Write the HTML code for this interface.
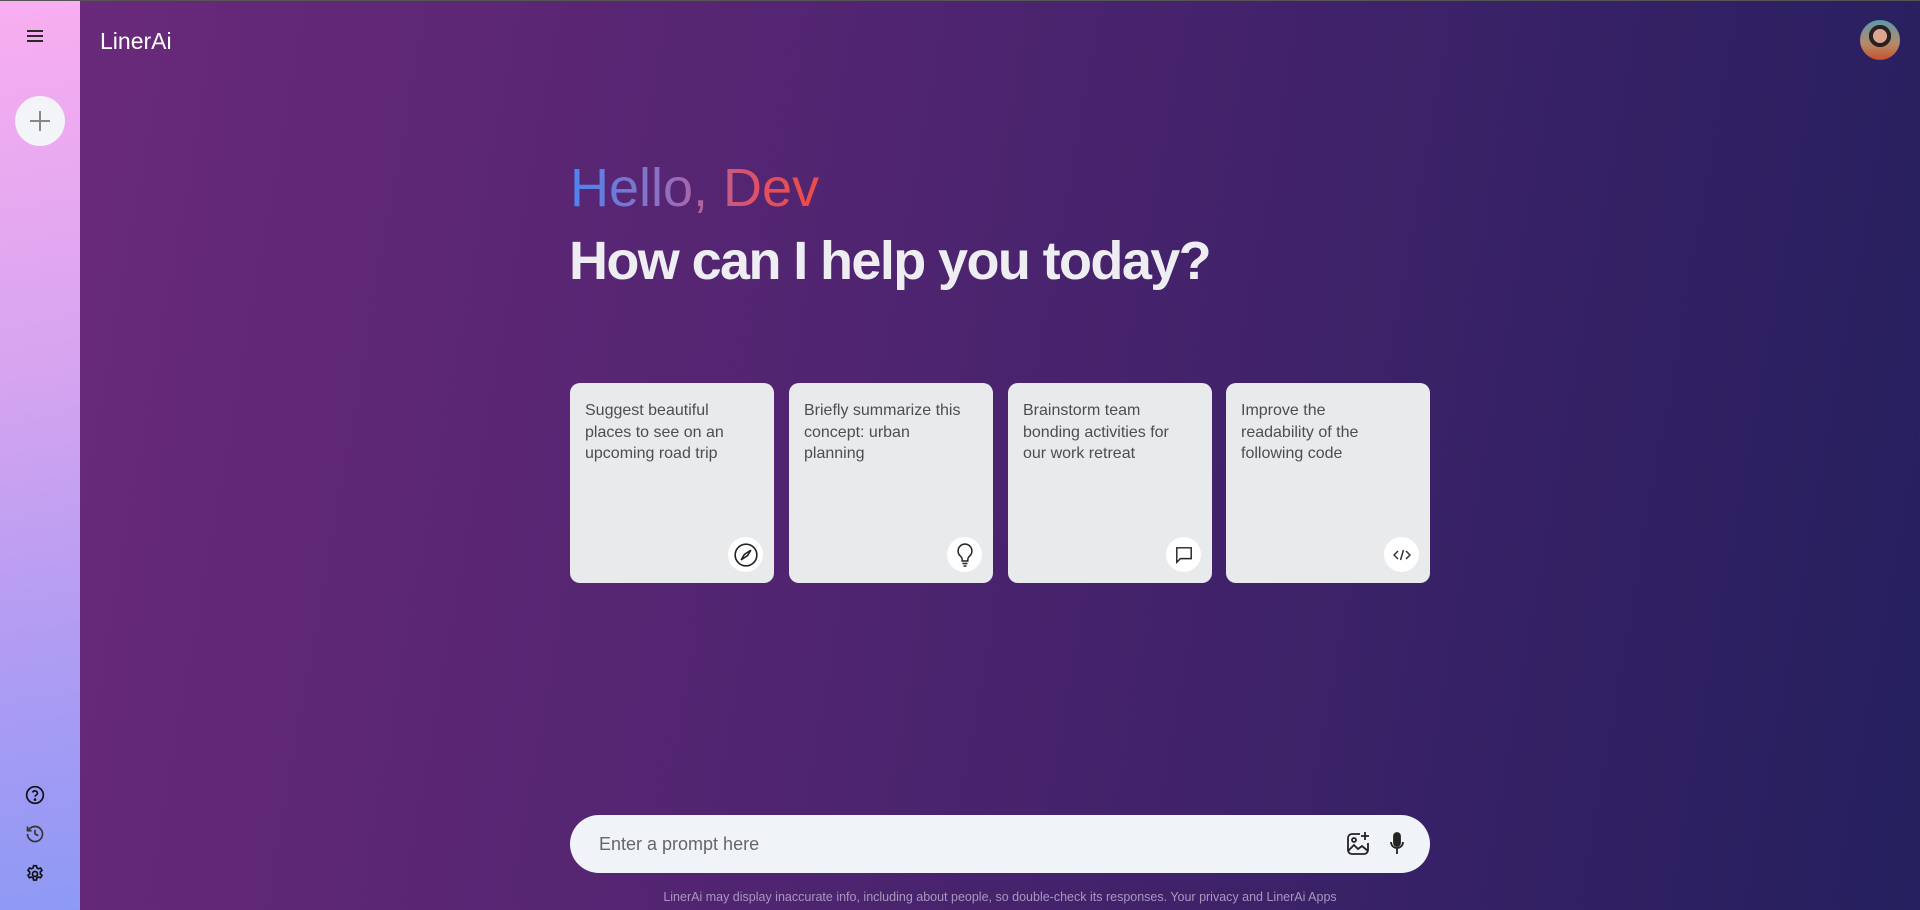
<!DOCTYPE html>
<html><head><meta charset="utf-8"><style>
*{margin:0;padding:0;box-sizing:border-box}
body{width:1920px;height:910px;overflow:hidden;font-family:"Liberation Sans",sans-serif;position:relative;background:linear-gradient(100deg,#6c2a7b 0%,#4f2470 45%,#241f5e 100%)}
.top{position:absolute;left:0;top:0;width:1920px;height:1px;background:#555}
.side{position:absolute;left:0;top:1px;width:80px;height:909px;background:linear-gradient(170deg,#f9aef0 0%,#d7a4f0 40%,#ab9bf3 75%,#8d9af5 100%)}
.abs{position:absolute}
.plus{left:15px;top:96px;width:50px;height:50px;border-radius:50%;background:#f3f4f7}
.logo{left:100px;top:28px;color:#fff;font-size:23px}
.hello{left:570px;top:158px;font-size:54px;line-height:60px;background:linear-gradient(90deg,#4a86f0 0%,#9a6cb8 40%,#e25060 70%,#f04a40 100%);-webkit-background-clip:text;background-clip:text;color:transparent;width:270px}
.how{left:569px;top:228px;font-size:54px;line-height:66px;color:#eeeef2;letter-spacing:-1.6px;font-weight:bold}
.card{top:383px;width:204px;height:200px;background:#e9eaec;border-radius:10px;padding:17px 15px;font-size:16px;line-height:21.5px;color:#4d4d52}
.card span{display:block;width:170px}
.ic{position:absolute;right:11px;bottom:11px;width:35px;height:35px;border-radius:50%;background:#fff;display:flex;align-items:center;justify-content:center}
.input{left:570px;top:815px;width:860px;height:58px;border-radius:29px;background:#f0f4f9}
.ph{left:599px;top:834px;font-size:18px;color:#666}
.foot{left:0;width:2000px;top:890px;text-align:center;font-size:12.5px;color:#a897bf}
.av{left:1860px;top:20px;width:40px;height:40px;border-radius:50%;background:radial-gradient(circle at 50% 40%,#d9a590 0 22%,#2a2020 23% 35%,transparent 36%),linear-gradient(180deg,#5c9aa8,#b58a6a 60%,#c9502a 100%)}
</style></head><body>
<div class="top"></div>
<div class="side"></div>
<svg class="abs" style="left:26px;top:29px" width="18" height="14" viewBox="0 0 18 14"><path d="M1 2h16M1 7h16M1 12h16" stroke="#111" stroke-width="1.8"/></svg>
<div class="abs plus"></div>
<svg class="abs" style="left:29px;top:110px" width="22" height="22" viewBox="0 0 22 22"><path d="M11 1v20M1 11h20" stroke="#888" stroke-width="2"/></svg>
<svg class="abs" style="left:25px;top:785px" width="20" height="20" viewBox="0 0 24 24" fill="none" stroke="#111" stroke-width="2"><circle cx="12" cy="12" r="10"/><path d="M9.1 9a3 3 0 0 1 5.8 1c0 2-3 2.5-3 4"/><circle cx="12" cy="17.5" r=".6" fill="#111"/></svg>
<svg class="abs" style="left:25px;top:824px" width="20" height="20" viewBox="0 0 24 24" fill="none" stroke="#333" stroke-width="2"><path d="M3 12a9 9 0 1 0 3-6.7L3 8"/><path d="M3 3v5h5"/><path d="M12 7v5l4 2"/></svg>
<svg class="abs" style="left:25px;top:864px" width="20" height="20" viewBox="0 0 24 24" fill="none" stroke="#111" stroke-width="2"><circle cx="12" cy="12" r="3"/><path d="M10.3 2h3.4l.5 2.6 2 1.1 2.5-.9 1.7 2.9-2 1.8v2.3l2 1.8-1.7 2.9-2.5-.9-2 1.1-.5 2.6h-3.4l-.5-2.6-2-1.1-2.5.9-1.7-2.9 2-1.8V9.5l-2-1.8 1.7-2.9 2.5.9 2-1.1z"/></svg>
<div class="abs logo">LinerAi</div>
<div class="abs av"></div>
<div class="abs hello">Hello, Dev</div>
<div class="abs how">How can I help you today?</div>
<div class="abs card" style="left:570px"><span>Suggest beautiful places to see on an upcoming road trip</span><div class="ic"><svg width="26" height="26" viewBox="0 0 24 24" fill="none" stroke="#222" stroke-width="1.5"><circle cx="12" cy="12" r="10"/><path d="M16.5 7.5l-6 4 -3 5 6-4z"/></svg></div></div>
<div class="abs card" style="left:789px"><span>Briefly summarize this concept: urban planning</span><div class="ic"><svg width="22" height="26" viewBox="0 0 20 26" fill="none" stroke="#222" stroke-width="1.5"><path d="M10 2a7 7 0 0 0-4 12.7c.8.8 1.2 1.8 1.2 3V19h5.6v-1.3c0-1.2.4-2.2 1.2-3A7 7 0 0 0 10 2z"/><path d="M7.5 21.5h5M8.5 24h3"/></svg></div></div>
<div class="abs card" style="left:1008px"><span>Brainstorm team bonding activities for our work retreat</span><div class="ic"><svg width="18" height="18" viewBox="0 0 20 20" fill="none" stroke="#222" stroke-width="1.6"><path d="M2 2h16v12H6l-4 4z"/></svg></div></div>
<div class="abs card" style="left:1226px"><span style="width:150px">Improve the readability of the following code</span><div class="ic"><svg width="18" height="12" viewBox="0 0 18 12" fill="none" stroke="#333" stroke-width="1.5"><path d="M5 2L1 6l4 4M13 2l4 4-4 4M10.5 1l-3 10"/></svg></div></div>
<div class="abs input"></div>
<div class="abs ph">Enter a prompt here</div>
<svg class="abs" style="left:1346px;top:831px" width="24" height="26" viewBox="0 0 24 26" fill="none" stroke="#222" stroke-width="1.8"><path d="M14 3H6a4 4 0 0 0-4 4v12a4 4 0 0 0 4 4h12a4 4 0 0 0 4-4v-7"/><path d="M19 1v8M15 5h8"/><circle cx="8" cy="9" r="2"/><path d="M2 20l6-6 4 4 4-3 6 5"/></svg>
<svg class="abs" style="left:1389px;top:832px" width="16" height="24" viewBox="0 0 16 24" fill="none" stroke="#222" stroke-width="1.8"><rect x="5" y="1" width="6" height="13" rx="3" fill="#222"/><path d="M2 10a6 6 0 0 0 12 0M8 16v6"/></svg>
<div class="abs foot">LinerAi may display inaccurate info, including about people, so double-check its responses. Your privacy and LinerAi Apps</div>
</body></html>
